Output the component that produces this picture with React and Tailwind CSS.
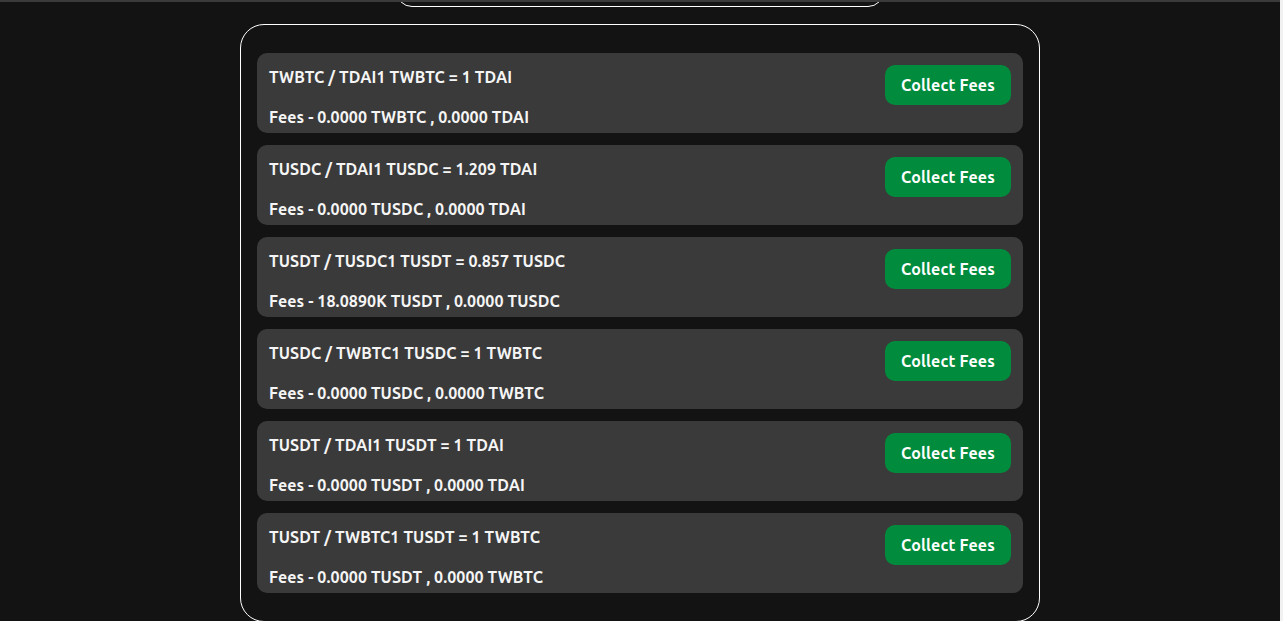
import React from 'react';

const pools = [
  { pair: 'TWBTC / TDAI', rate: '1 TWBTC = 1 TDAI', fees: 'Fees - 0.0000 TWBTC , 0.0000 TDAI' },
  { pair: 'TUSDC / TDAI', rate: '1 TUSDC = 1.209 TDAI', fees: 'Fees - 0.0000 TUSDC , 0.0000 TDAI' },
  { pair: 'TUSDT / TUSDC', rate: '1 TUSDT = 0.857 TUSDC', fees: 'Fees - 18.0890K TUSDT , 0.0000 TUSDC' },
  { pair: 'TUSDC / TWBTC', rate: '1 TUSDC = 1 TWBTC', fees: 'Fees - 0.0000 TUSDC , 0.0000 TWBTC' },
  { pair: 'TUSDT / TDAI', rate: '1 TUSDT = 1 TDAI', fees: 'Fees - 0.0000 TUSDT , 0.0000 TDAI' },
  { pair: 'TUSDT / TWBTC', rate: '1 TUSDT = 1 TWBTC', fees: 'Fees - 0.0000 TUSDT , 0.0000 TWBTC' },
];

function PoolCard({ pool }) {
  return (
    <div className="flex justify-between rounded-[10px] bg-[#3a3a3a] px-3">
      <div className="flex flex-col pt-3 pb-1">
        <div className="h-6 leading-6">
          {pool.pair}
          {pool.rate}
        </div>
        <div className="mt-4 h-6 leading-6">{pool.fees}</div>
      </div>
      <div className="pt-3">
        <button className="h-10 w-[126px] rounded-[10px] bg-[#008c3c] text-white tracking-[0.15px]">
          Collect Fees
        </button>
      </div>
    </div>
  );
}

export default function App() {
  return (
    <div
      className="flex h-[621px] w-full overflow-hidden bg-[#131313] text-[16px] font-bold tracking-[0.1px] text-[#f5f5f5]"
      style={{ fontFamily: 'Ubuntu, Lato, "Noto Sans", sans-serif' }}
    >
      <div className="flex-1">
        <div className="h-[2px] bg-[#3b3b3b]" />
        {/* bottom edge of the box above, scrolled out of view */}
        <div className="mx-auto h-[5px] w-[488px] overflow-hidden">
          <div className="-mt-[35px] h-[40px] rounded-2xl border border-white" />
        </div>
        <div className="mx-auto mt-[17px] w-[800px] rounded-3xl border border-white px-4 pt-7 pb-7">
          <div className="flex flex-col gap-3">
            {pools.map((pool) => (
              <PoolCard key={pool.pair} pool={pool} />
            ))}
          </div>
        </div>
      </div>
      <div className="w-[3px] bg-[#f1f1f1]" />
    </div>
  );
}
